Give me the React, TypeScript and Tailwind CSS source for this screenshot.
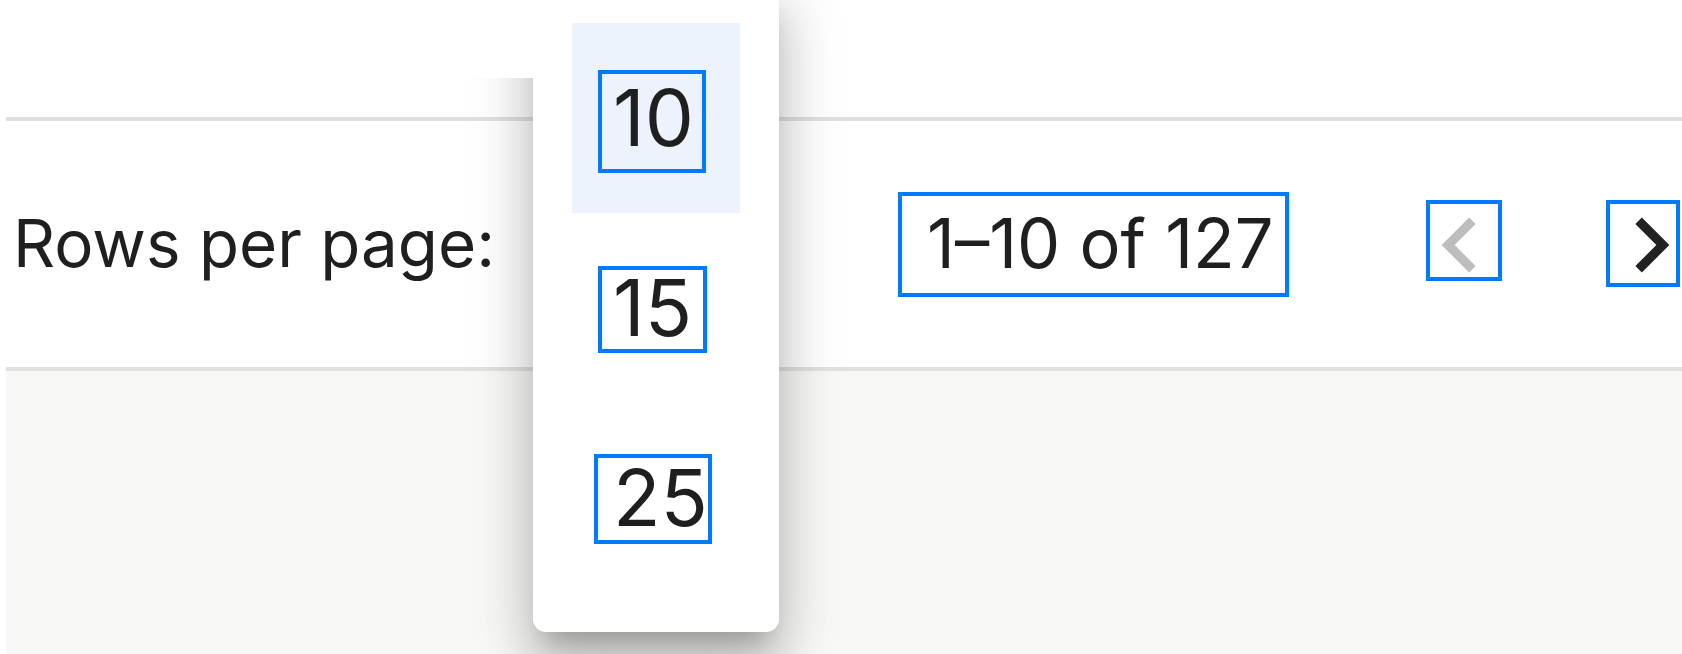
import React from 'react';

const font = { fontFamily: 'Inter, "Noto Sans", sans-serif' };

function ChevronLeft({ className }: { className?: string }) {
  return (
    <svg viewBox="0 0 24 24" className={className} fill="currentColor">
      <path d="M15.41 16.59 10.83 12l4.58-4.59L14 6l-6 6 6 6 1.41-1.41z" />
    </svg>
  );
}

function ChevronRight({ className }: { className?: string }) {
  return (
    <svg viewBox="0 0 24 24" className={className} fill="currentColor">
      <path d="M8.59 16.59 13.17 12 8.59 7.41 10 6l6 6-6 6-1.41-1.41z" />
    </svg>
  );
}

const options = [10, 15, 25];

export default function App() {
  return (
    <div
      className="relative w-[1682px] h-[654px] overflow-hidden bg-white text-[#1f1f1f]"
      style={font}
    >
      {/* table footer */}
      <div className="ml-[6px] flex flex-col h-full">
        <div className="h-[121px] border-b-4 border-[#e0e0e0] bg-white" />
        <div className="h-[246px] flex items-center bg-white">
          <span className="ml-[7px] text-[65.5px] leading-none">Rows per page:</span>
          {/* select sits under the open menu */}
          <div className="w-[400px]" />
          <span className="ml-[32px] text-[68.5px] leading-none">1–10 of 127</span>
          <div className="ml-auto flex items-center gap-[81px] mt-[2px] mr-[-24px]">
            <button className="text-[#bdbdbd]" disabled>
              <ChevronLeft className="w-[110px] h-[110px]" />
            </button>
            <button className="text-[#212121]">
              <ChevronRight className="w-[110px] h-[110px]" />
            </button>
          </div>
        </div>
        <div className="flex-1 border-t-4 border-[#e0e0e0] bg-[#f8f8f6]" />
      </div>

      {/* open rows-per-page menu */}
      <div className="absolute left-[533px] top-[-20px] z-20 w-[246px] h-[652px] rounded-[13px] bg-white pt-[43px] shadow-[0_23px_23px_-14px_rgba(0,0,0,0.2),0_37px_46px_5px_rgba(0,0,0,0.14),0_14px_64px_9px_rgba(0,0,0,0.12)]">
        <ul className="flex flex-col">
          {options.map((n) => (
            <li
              key={n}
              className={
                'mx-[39px] h-[190px] flex items-center pl-[41px] text-[78px] leading-none ' +
                (n === 10 ? 'bg-[#ecf3fd]' : '')
              }
            >
              {n}
            </li>
          ))}
        </ul>
      </div>
      <div className="absolute left-0 top-0 z-30 w-[533px] h-[78px] bg-white" />

      {/* outline boxes */}
      <div className="absolute z-40 left-[598px] top-[70px] w-[108px] h-[103px] border-4 border-[#007bff]" />
      <div className="absolute z-40 left-[598px] top-[266px] w-[109px] h-[87px] border-4 border-[#007bff]" />
      <div className="absolute z-40 left-[594px] top-[454px] w-[118px] h-[90px] border-4 border-[#007bff]" />
      <div className="absolute z-40 left-[898px] top-[192px] w-[391px] h-[105px] border-4 border-[#007bff]" />
      <div className="absolute z-40 left-[1426px] top-[200px] w-[76px] h-[81px] border-4 border-[#007bff]" />
      <div className="absolute z-40 left-[1606px] top-[200px] w-[74px] h-[87px] border-4 border-[#007bff]" />
    </div>
  );
}
